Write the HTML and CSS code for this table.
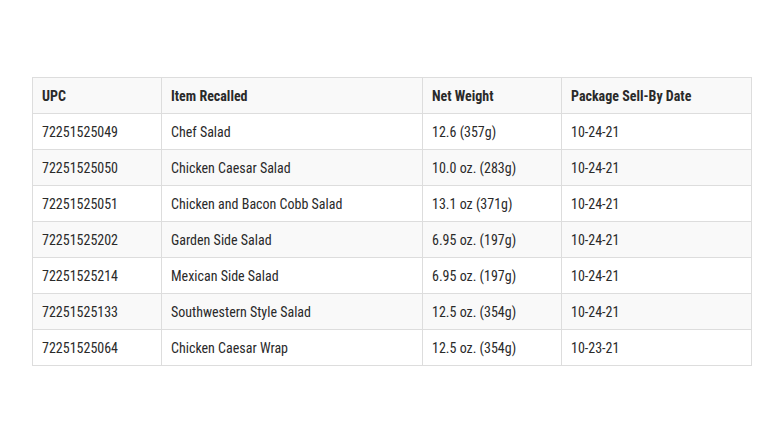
FILE: index.html
```html
<!DOCTYPE html>
<html lang="en">
<head>
<meta charset="utf-8">
<title>Recalled Items</title>
<link rel="stylesheet" href="styles.css">
</head>
<body>
<main class="page">
  <table class="recall">
    <colgroup>
      <col class="c-upc">
      <col class="c-item">
      <col class="c-weight">
      <col class="c-date">
    </colgroup>
    <thead>
      <tr><th>UPC</th><th>Item Recalled</th><th>Net Weight</th><th>Package Sell-By Date</th></tr>
    </thead>
    <tbody>
      <tr><td>72251525049</td><td>Chef Salad</td><td>12.6 (357g)</td><td>10-24-21</td></tr>
      <tr><td>72251525050</td><td>Chicken Caesar Salad</td><td>10.0 oz. (283g)</td><td>10-24-21</td></tr>
      <tr><td>72251525051</td><td>Chicken and Bacon Cobb Salad</td><td>13.1 oz (371g)</td><td>10-24-21</td></tr>
      <tr><td>72251525202</td><td>Garden Side Salad</td><td>6.95 oz. (197g)</td><td>10-24-21</td></tr>
      <tr><td>72251525214</td><td>Mexican Side Salad</td><td>6.95 oz. (197g)</td><td>10-24-21</td></tr>
      <tr><td>72251525133</td><td>Southwestern Style Salad</td><td>12.5 oz. (354g)</td><td>10-24-21</td></tr>
      <tr><td>72251525064</td><td>Chicken Caesar Wrap</td><td>12.5 oz. (354g)</td><td>10-23-21</td></tr>
    </tbody>
  </table>
</main>
</body>
</html>
```

FILE: styles.css
```css
html, body {
  margin: 0;
  padding: 0;
  background: #ffffff;
}

.page {
  padding: 77px 0 0 32px;
}

.recall {
  border-collapse: collapse;
  width: 720px;
  table-layout: fixed;
  font-family: "Roboto Condensed", Roboto, "Liberation Sans", sans-serif;
  font-stretch: condensed;
  font-size: 14px;
  color: #2a2a2a;
}

.c-upc { width: 129px; }
.c-item { width: 261px; }
.c-weight { width: 139px; }
.c-date { width: 190px; }

.recall th,
.recall td {
  border: 1px solid #dddddd;
  height: 36px;
  padding: 0 9px;
  text-align: left;
  vertical-align: middle;
  box-sizing: border-box;
  white-space: nowrap;
}

.recall th {
  font-weight: 700;
}

.recall thead tr,
.recall tbody tr:nth-child(even) {
  background: #f9f9f9;
}
```
